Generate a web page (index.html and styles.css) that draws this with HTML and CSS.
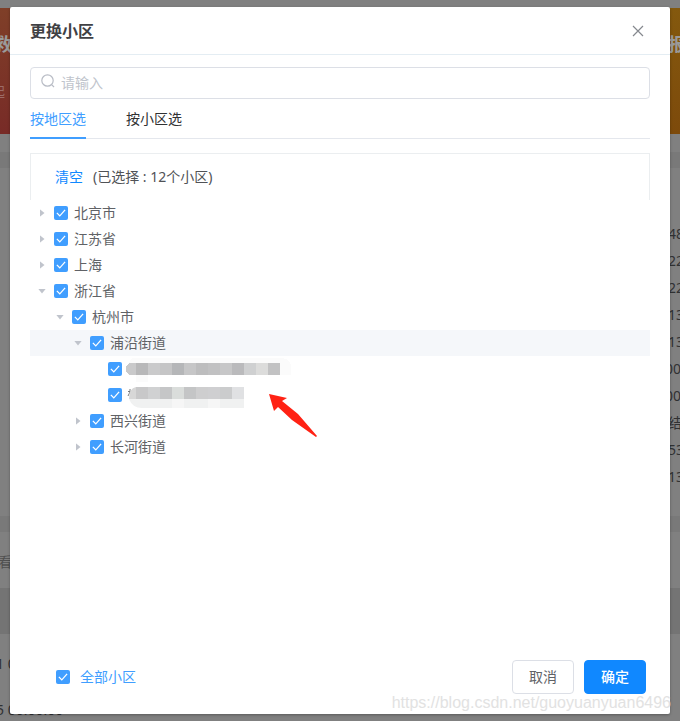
FILE: index.html
```html
<!DOCTYPE html>
<html lang="zh-CN">
<head>
<meta charset="utf-8">
<meta name="viewport" content="width=device-width, initial-scale=1">
<title>更换小区</title>
<link rel="stylesheet" href="styles.css">
</head>
<body>
<div class="backdrop" aria-hidden="true">
  <div class="side side-left">
    <div class="card card-red"><b>救</b><span>起</span></div>
    <div class="band band-thin"></div>
    <div class="block block-tall"></div>
    <div class="band band-thin"></div>
    <div class="block block-short"><span>查看</span></div>
    <div class="band band-head"></div>
    <div class="records"><span>01 00:00:00</span><span>05 00:00:00</span></div>
  </div>
  <div class="side side-right">
    <div class="card card-gold"><b>报</b></div>
    <div class="band band-thin"></div>
    <div class="block block-tall numbers">
      <span>48</span><span>22</span><span>22</span><span>13</span><span>13</span><span class="cut">00</span><span class="cut">00</span><span>结</span><span>53</span><span>13</span>
    </div>
    <div class="band band-thin"></div>
    <div class="block block-short"></div>
    <div class="band band-head"></div>
  </div>
</div>

<main class="dialog" role="dialog" aria-labelledby="dialog-title">
  <header class="dialog-header">
    <h1 id="dialog-title">更换小区</h1>
    <button class="close" type="button" aria-label="关闭">
      <svg width="12" height="12" viewBox="0 0 12 12"><path d="M1 1l10 10M11 1L1 11"/></svg>
    </button>
  </header>

  <div class="dialog-body">
    <label class="search">
      <svg width="14" height="14" viewBox="0 0 14 14"><circle cx="6.5" cy="6.5" r="5.7"/><path d="M10.6 10.6l2.4 2.4"/></svg>
      <input type="text" placeholder="请输入" aria-label="搜索小区">
    </label>
    <nav class="tabs">
      <a class="tab active" href="#area">按地区选</a>
      <a class="tab" href="#community">按小区选</a>
    </nav>
    <div class="summary"><button class="clear" type="button">清空</button><span>(已选择 : 12个小区)</span></div>

    <ul class="tree">
      <li><div class="row"><i class="caret"></i><input type="checkbox" id="bj" checked><label for="bj">北京市</label></div></li>
      <li><div class="row"><i class="caret"></i><input type="checkbox" id="js" checked><label for="js">江苏省</label></div></li>
      <li><div class="row"><i class="caret"></i><input type="checkbox" id="sh" checked><label for="sh">上海</label></div></li>
      <li><div class="row"><i class="caret open"></i><input type="checkbox" id="zj" checked><label for="zj">浙江省</label></div>
        <ul>
          <li><div class="row level-2"><i class="caret open"></i><input type="checkbox" id="hz" checked><label for="hz">杭州市</label></div>
            <ul>
              <li><div class="row level-3 current"><i class="caret open"></i><input type="checkbox" id="py" checked><label for="py">浦沿街道</label></div>
                <ul>
                  <li><div class="row level-4"><i class="caret leaf"></i><input type="checkbox" id="c1" checked><label for="c1">
                    <svg class="mosaic" width="164" height="26" viewBox="0 0 164 26" shape-rendering="crispEdges">
                      <path fill="#fbfbfb" d="M4 2H154Q163 3 163 11V19H20V26H8V19H0V8Z"/>
                      <path fill="#c9c9ca" d="M8 7H2Q-2 8 -2 13T2 19H8Z"/>
                      <path fill="#b8b8b9" d="M8 7h12v12H8z"/><path fill="#cacacb" d="M20 7h12v12H20z"/><path fill="#c5c5c6" d="M32 7h12v12H32z"/>
                      <path fill="#b5b6b8" d="M44 7h12v12H44z"/><path fill="#c6c6c7" d="M56 7h12v12H56z"/><path fill="#bdbdbe" d="M68 7h12v12H68z"/>
                      <path fill="#c1c1c2" d="M80 7h12v12H80z"/><path fill="#c7c7c8" d="M92 7h12v12H92z"/><path fill="#bababc" d="M104 7h12v12h-12z"/>
                      <path fill="#cfd0d1" d="M116 7h12v12h-12z"/><path fill="#dcdcdb" d="M128 7h12v12h-12z"/><path fill="#c2c2c3" d="M140 7h12v12h-12z"/>
                    </svg></label></div></li>
                  <li><div class="row level-4"><i class="caret leaf"></i><input type="checkbox" id="c2" checked><label for="c2">
                    <svg class="mosaic" width="164" height="26" viewBox="0 0 164 26">
                      <path fill="none" stroke="#77787b" d="M0 9.5h3M2 7v3L0 14M2.500 10v7"/>
                      <path fill="#f0f1f1" d="M1 17H116V26H16Q5 27 1 17Z"/><path fill="#f6f6f6" d="M44 17h12v9H44zM80 17h12v9H80z"/>
                      <path fill="#d7d7d7" d="M8 5Q1 6 1 17H8Z"/>
                      <g shape-rendering="crispEdges">
                      <path fill="#c8c8c9" d="M8 5h12v12H8z"/><path fill="#d0d1d2" d="M20 5h12v12H20z"/><path fill="#c5c6c7" d="M32 5h12v12H32z"/>
                      <path fill="#dadddb" d="M44 5h12v12H44z"/><path fill="#c4c5c6" d="M56 5h12v12H56z"/><path fill="#cececf" d="M68 5h12v12H68z"/>
                      <path fill="#cfcfd1" d="M80 5h12v12H80z"/><path fill="#cbcccd" d="M92 5h12v12H92z"/><path fill="#e0e1e3" d="M104 5h12v12h-12z"/>
                      </g>
                    </svg></label></div></li>
                </ul>
              </li>
              <li><div class="row level-3"><i class="caret"></i><input type="checkbox" id="xx" checked><label for="xx">西兴街道</label></div></li>
              <li><div class="row level-3"><i class="caret"></i><input type="checkbox" id="ch" checked><label for="ch">长河街道</label></div></li>
            </ul>
          </li>
        </ul>
      </li>
    </ul>
  </div>

  <footer class="dialog-footer">
    <input type="checkbox" id="all" checked><label for="all">全部小区</label>
    <button class="btn" type="button">取消</button>
    <button class="btn primary" type="button">确定</button>
  </footer>

  <svg class="pointer" width="50" height="45" viewBox="0 0 50 45" aria-hidden="true"><path fill="#ff2214" d="M1 1L19 5L14 8L30 21L49 43L48 44L24 27L10 14L6 18Z"/></svg>
</main>
<div class="watermark">https://blog.csdn.net/guoyuanyuan6496</div>
</body>
</html>
```
FILE: styles.css
```css
* { box-sizing: border-box; }

body {
  margin: 0;
  min-height: 100vh;
  position: relative;
  display: flex;
  overflow: hidden;
  background: #808080;
  color: #606266;
  font: 14px/20px "Noto Sans", "Noto Sans CJK SC", sans-serif;
}

button, input { font: inherit; }
ul { list-style: none; margin: 0; padding: 0; }

/* Dimmed page behind the dialog */
.backdrop {
  position: absolute;
  inset: 0;
  display: flex;
  justify-content: space-between;
  padding-top: 8px;
  color: #303133;
}
.side { width: 12px; white-space: nowrap; }
.card {
  height: 126px;
  margin-bottom: 18px;
  padding-top: 24px;
  overflow: hidden;
  color: #9a9a9a;
  display: flex;
  flex-direction: column;
  gap: 26px;
}
.card b { font-size: 18px; line-height: 24px; }
.card-red { background: linear-gradient(#7f3f28, #782b27); align-items: flex-end; }
.card-gold { background: linear-gradient(#84590e, #7d4a0b); }
.card-red span { color: #9c6c67; margin-right: 7px; }
.band { background: #797979; }
.band-thin { height: 16px; }
.band-head { height: 46px; background: #747474; }
.block-tall { height: 348px; }
.block-short { height: 56px; padding-top: 20px; display: flex; justify-content: flex-end; overflow: hidden; color: #505050; }
.numbers { padding-top: 56px; display: flex; flex-direction: column; gap: 7px; overflow: hidden; }
.cut { margin-left: -3px; }
.records { display: flex; flex-direction: column; gap: 26px; padding-top: 20px; margin-left: -12px; }

/* Dialog */
.dialog {
  position: relative;
  flex: 1;
  margin: 7px 10px;
  display: flex;
  flex-direction: column;
  background: #fff;
  border-radius: 2px;
  box-shadow: 0 1px 3px rgba(0, 0, 0, .3);
}
.dialog-header {
  display: flex;
  align-items: center;
  justify-content: space-between;
  height: 48px;
  padding: 0 20px;
  border-bottom: 1px solid #e4edf3;
}
h1 { margin: 0; font-size: 16px; line-height: 24px; font-weight: 700; color: #404144; }
.close { width: 24px; height: 24px; padding: 6px; border: 0; background: none; display: flex; }
.close svg { stroke: #85888e; stroke-width: 1.2; fill: none; }
.dialog-body { flex: 1; padding: 12px 20px; }

.search {
  display: flex;
  align-items: center;
  gap: 6px;
  height: 32px;
  padding: 0 10px;
  border: 1px solid #dcdfe6;
  border-radius: 4px;
}
.search svg { flex: none; fill: none; stroke: #b8bcc5; stroke-width: 1.2; margin-bottom: 4px; }
.search input { flex: 1; min-width: 0; border: 0; padding: 0; outline: 0; background: none; }
.search input::placeholder { color: #c0c4cc; }

.tabs { display: flex; gap: 40px; height: 40px; border-bottom: 1px solid #e4e7ed; }
.tab { height: 40px; line-height: 40px; color: #303133; text-decoration: none; }
.tab.active { color: #409eff; border-bottom: 2px solid #409eff; }

.summary {
  display: flex;
  align-items: center;
  gap: 10px;
  height: 47px;
  margin-top: 14px;
  padding: 0 24px;
  border: 1px solid #ebeef0;
  border-bottom: 0;
  color: #505256;
}
.clear { padding: 0; border: 0; background: none; color: #1088ff; }

input[type="checkbox"] {
  appearance: none;
  flex: none;
  display: grid;
  place-items: center;
  width: 14px;
  height: 14px;
  margin: 0;
  border-radius: 2px;
  background: #409eff;
}
input[type="checkbox"]::before {
  content: "";
  width: 10px;
  height: 8px;
  background: #fff;
  clip-path: polygon(4% 54%, 13% 43%, 38% 76%, 86% 5%, 96% 15%, 38% 98%);
}

.row { display: flex; align-items: center; height: 26px; }
.row label { margin-left: 6px; }
.level-2 { padding-left: 18px; }
.level-3 { padding-left: 36px; }
.level-4 { padding-left: 54px; }
.current { background: #f5f7fa; }
.caret { flex: none; width: 24px; height: 12px; display: grid; place-items: center; }
.caret::before {
  content: "";
  width: 5px;
  height: 8px;
  background: #c0c4cc;
  clip-path: polygon(0 0, 100% 50%, 0 100%);
}
.caret.open::before { width: 8px; height: 5px; clip-path: polygon(0 0, 100% 0, 50% 100%); }
.caret.leaf::before { content: none; }
.mosaic { display: block; overflow: visible; }

.dialog-footer { display: flex; align-items: center; gap: 10px; padding: 0 24px 20px 46px; }
.dialog-footer label { color: #409eff; margin-right: auto; }
.btn {
  width: 62px;
  height: 34px;
  padding: 0;
  border: 1px solid #dcdfe6;
  border-radius: 4px;
  background: #fff;
  color: #606266;
}
.btn.primary { border-color: #1088ff; background: #1088ff; color: #fff; font-weight: 500; }

/* Marks laid over the dialog */
.pointer { position: absolute; left: 258px; top: 386px; }
.watermark {
  position: absolute;
  right: 9px;
  bottom: 8px;
  color: #e2e2e2;
  font: 16px/20px "Liberation Sans", sans-serif;
}
```
